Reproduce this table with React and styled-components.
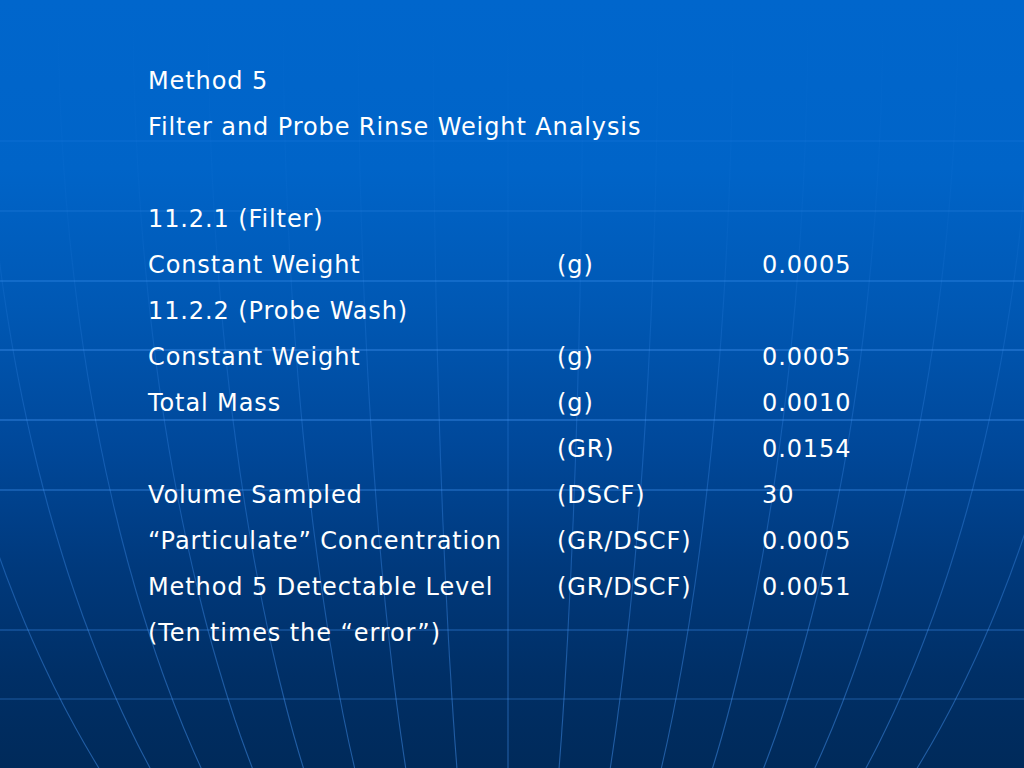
import React from "react";
import styled, { createGlobalStyle } from "styled-components";

const GlobalStyle = createGlobalStyle`
  html, body {
    margin: 0;
    padding: 0;
    background: #002b58;
  }
`;

// 슬라이드 전체 - 위는 밝은 파랑, 아래로 갈수록 남색
const Slide = styled.div`
  position: relative;
  width: 1024px;
  height: 768px;
  overflow: hidden;
  background: linear-gradient(
    to bottom,
    #0066cc 0%,
    #0064c8 22%,
    #0058b4 40%,
    #00489a 58%,
    #00397c 74%,
    #002f66 88%,
    #002a5a 100%
  );
  font-family: "DejaVu Sans", Verdana, sans-serif;
  color: #ffffff;
`;

// 배경의 지구본 격자
const Globe = styled.svg`
  position: absolute;
  inset: 0;
  pointer-events: none;
`;

const Content = styled.div`
  position: relative;
  padding: 58px 0 0 148px;
  display: grid;
  grid-template-columns: 409px 205px auto;
  font-size: 24px;
  line-height: 46px;
  letter-spacing: 0.9px;
`;

const Cell = styled.div`
  white-space: nowrap;
  grid-column: ${(p) => p.$span ? "1 / span 3" : "auto"};
`;

const Blank = styled.div`
  grid-column: 1 / span 3;
  height: 46px;
`;

const rows = [
  { title: "Method 5" },
  { title: "Filter and Probe Rinse Weight Analysis" },
  { blank: true },
  { title: "11.2.1 (Filter)" },
  { cells: ["Constant Weight", "(g)", "0.0005"] },
  { title: "11.2.2 (Probe Wash)" },
  { cells: ["Constant Weight", "(g)", "0.0005"] },
  { cells: ["Total Mass", "(g)", "0.0010"] },
  { cells: ["", "(GR)", "0.0154"] },
  { cells: ["Volume Sampled", "(DSCF)", "30"] },
  { cells: ["\u201CParticulate\u201D Concentration", "(GR/DSCF)", "0.0005"] },
  { cells: ["Method 5 Detectable Level", "(GR/DSCF)", "0.0051"] },
  { title: "(Ten times the \u201Cerror\u201D)" },
];

const latitudes = [
  { y: 141, o: 0.15 },
  { y: 211, o: 0.22 },
  { y: 281, o: 0.4 },
  { y: 350, o: 0.5 },
  { y: 420, o: 0.5 },
  { y: 490, o: 0.45 },
  { y: 630, o: 0.35 },
  { y: 699, o: 0.3 },
];

function meridian(d) {
  const cx = 508;
  const B = 1050;
  let s = "";
  for (let y = 0; y <= 776; y += 8) {
    const h = Math.sqrt(Math.max(0, 1 - (y / B) * (y / B)));
    const x = cx + d * h;
    s += (y === 0 ? "M" : "L") + x.toFixed(1) + " " + y;
  }
  return s;
}

const meridians = [];
for (let k = -8; k <= 8; k++) meridians.push(k * 75);

function GlobeLines() {
  return (
    <Globe width="1024" height="768" viewBox="0 0 1024 768">
      <defs>
        <linearGradient id="fade" x1="0" y1="0" x2="0" y2="768" gradientUnits="userSpaceOnUse">
          <stop offset="0" stopColor="#4a9cff" stopOpacity="0" />
          <stop offset="0.3" stopColor="#4a9cff" stopOpacity="0.06" />
          <stop offset="0.55" stopColor="#4a9cff" stopOpacity="0.25" />
          <stop offset="1" stopColor="#4a9cff" stopOpacity="0.45" />
        </linearGradient>
      </defs>
      {latitudes.map((l) => (
        <line
          key={l.y}
          x1="0"
          x2="1024"
          y1={l.y}
          y2={l.y}
          stroke="#3f93f0"
          strokeOpacity={l.o}
          strokeWidth="1.5"
        />
      ))}
      {meridians.map((d) => (
        <path key={d} d={meridian(d)} fill="none" stroke="url(#fade)" strokeWidth="1.1" />
      ))}
    </Globe>
  );
}

function App() {
  return (
    <>
      <GlobalStyle />
      <Slide>
        <GlobeLines />
        <Content>
          {rows.map((r, i) => {
            if (r.blank) return <Blank key={i} />;
            if (r.title) return <Cell key={i} $span>{r.title}</Cell>;
            return r.cells.map((c, j) => <Cell key={i + "-" + j}>{c}</Cell>);
          })}
        </Content>
      </Slide>
    </>
  );
}

export default App;
